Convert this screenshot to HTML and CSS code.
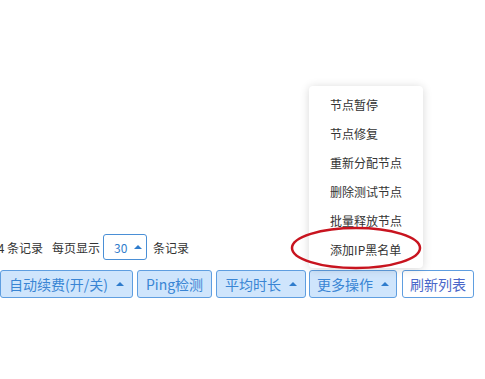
FILE: index.html
```html
<!DOCTYPE html>
<html lang="zh-CN">

<head>
  <meta charset="UTF-8">
  <title>节点列表</title>
  <link rel="stylesheet" href="styles.css">
</head>

<body>
  <div class="list-footer">
    <div class="pager-info">
      <span class="total">共 4 条记录</span>
      <span class="per-page">每页显示</span>
      <span class="page-size">30 <i class="caret"></i></span>
      <span>条记录</span>
    </div>

    <div class="toolbar">
      <button class="btn">自动续费(开/关) <i class="caret"></i></button>
      <button class="btn">Ping检测</button>
      <button class="btn">平均时长 <i class="caret"></i></button>
      <div class="dropup">
        <button class="btn">更多操作 <i class="caret"></i></button>
        <ul class="dropdown-menu">
          <li>节点暂停</li>
          <li>节点修复</li>
          <li>重新分配节点</li>
          <li>删除测试节点</li>
          <li>批量释放节点</li>
          <li>添加IP黑名单</li>
          <!-- 标注圈 -->
          <svg class="mark" width="132" height="44" viewBox="0 0 132 44">
            <ellipse cx="66" cy="22" rx="64" ry="20" fill="none" stroke="#c8141f" stroke-width="2.5" />
          </svg>
        </ul>
      </div>
      <button class="btn btn-plain">刷新列表</button>
    </div>
  </div>
</body>

</html>
```

FILE: styles.css
```css
body {
  margin: 0;
  font-family: "Microsoft YaHei", "Noto Sans CJK SC", sans-serif;
  font-size: 12px;
  color: #333;
  background: #fff;
  overflow: hidden;
}

.list-footer {
  padding-top: 234px;
}

.pager-info {
  display: flex;
  align-items: center;
  height: 26px;
  margin-left: -17px;
}

.pager-info .per-page {
  margin-left: 9px;
  margin-right: 3px;
}

.page-size {
  display: inline-flex;
  align-items: center;
  box-sizing: border-box;
  width: 44px;
  height: 26px;
  padding-left: 10px;
  margin-right: 6px;
  border: 1px solid #4a8fd6;
  border-radius: 3px;
  color: #2f7ccc;
}

.page-size .caret {
  margin-left: 7px;
  border-bottom-color: #2f7ccc;
}

.caret {
  display: inline-block;
  width: 0;
  height: 0;
  border-left: 4px solid transparent;
  border-right: 4px solid transparent;
  border-bottom: 4px solid #2f7ccc;
  margin-left: 8px;
  vertical-align: middle;
}

.toolbar {
  display: flex;
  gap: 4px;
  margin-top: 10px;
}

.btn {
  display: inline-flex;
  align-items: center;
  height: 28px;
  padding: 0 8px;
  font-family: inherit;
  font-size: 14px;
  color: #3a85d4;
  background: #cfe5fc;
  border: 1px solid #5f9ee0;
  border-radius: 3px;
  cursor: pointer;
}

.btn-plain {
  background: #fff;
  color: #4a67c9;
  margin-left: 1px;
  padding: 0 7px;
}

.dropup {
  position: relative;
  margin-left: -1px;
}

.dropup .btn {
  padding: 0 7px;
}

.dropdown-menu {
  position: absolute;
  left: 0;
  bottom: 30px;
  width: 114px;
  margin: 0;
  padding: 4px 0;
  list-style: none;
  background: #fff;
  border-radius: 4px;
  box-shadow: 0 1px 10px rgba(0, 0, 0, 0.16);
}

.dropdown-menu li {
  height: 29px;
  line-height: 29px;
  padding-left: 21px;
  font-size: 12px;
  color: #333;
  white-space: nowrap;
}

.mark {
  position: absolute;
  left: -19px;
  top: 140px;
}
```
